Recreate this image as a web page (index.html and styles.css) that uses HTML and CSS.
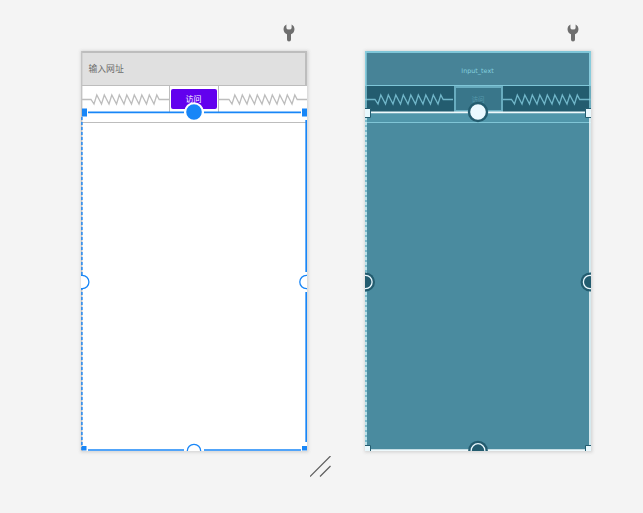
FILE: index.html
```html
<!DOCTYPE html>
<html lang="zh">
<head>
<meta charset="utf-8">
<title>Layout Editor</title>
<link rel="stylesheet" href="styles.css">
</head>
<body>
<svg class="defs" width="0" height="0">
  <defs>
    <path id="wrench" d="M3.400 .4A5.400 5.400 0 0 0 4 10.200V15.500Q4 17.500 6 17.500T8 15.500V10.200A5.400 5.400 0 0 0 8.600 .4V4Q8.600 5.500 6 5.500T3.400 4Z"/>
    <path id="spring" d="M0 13.500H10l3 4.500 2.800-9 4.700 9 2.800-9 4.700 9 2.800-9 4.700 9 2.800-9 4.700 9 2.800-9 4.700 9 2.800-9 4.700 9 2.800-9 4.700 9 2.800-9 4.700 9 2.800-9 2.400 4.500H89"/>
  </defs>
</svg>
<main class="surface">
  <section class="preview design">
    <svg class="wrench" viewBox="0 0 12 18"><use href="#wrench"/></svg>
    <div class="screen">
      <div class="field"><span>输入网址</span></div>
      <div class="row">
        <svg class="spring" viewBox="0 0 88 27"><use href="#spring"/></svg>
        <div class="cell"><div class="button">访问</div></div>
        <svg class="spring" viewBox="0 0 88 27"><use href="#spring"/></svg>
      </div>
      <div class="gap"></div>
      <div class="web"></div>
      <svg class="selection" viewBox="0 0 226 400">
        <path class="edge" d="M7 61.300H103M123 61.300H220M7 399H103M123 399H220M225.200 69V221M225.200 241V391"/>
        <path class="side" d="M.7 0V400"/>
        <path class="dash" d="M.9 66V399"/>
        <path class="outline" d="M1 57.500H6V65.500H1ZM221 57.500H226V65.500H221ZM1 395H5.500V399.500H1ZM221 395H226V399.500H221Z"/>
        <circle class="anchor" cx="113" cy="61" r="8.800"/>
        <circle class="ring" cx="1.200" cy="231" r="6.700"/>
        <circle class="ring" cx="225.500" cy="231" r="6.700"/>
        <circle class="ring" cx="113" cy="400" r="6.700"/>
      </svg>
    </div>
  </section>
  <section class="preview blueprint">
    <svg class="wrench" viewBox="0 0 12 18"><use href="#wrench"/></svg>
    <div class="screen">
      <div class="field"><span>Input_text</span></div>
      <div class="row">
        <svg class="spring" viewBox="0 0 88 27"><use href="#spring"/></svg>
        <div class="cell"><div class="button">访问</div></div>
        <svg class="spring" viewBox="1.500 0 88 27"><use href="#spring"/></svg>
      </div>
      <div class="gap"></div>
      <div class="web"></div>
      <svg class="selection" viewBox="0 0 226 400">
        <path class="side" d="M1 0V400M225 0V66"/>
        <path class="edge" d="M4 61.300H222M2 399.200H226M225 66V399"/>
        <path class="dash" d="M1 66V399"/>
        <path class="outline" d="M-1 57.500H5.500V66.500H-1ZM220.500 57.500H227V66.500H220.500ZM-1 394.500H5.500V401H-1ZM220.500 394.500H227V401H220.500Z"/>
        <circle class="anchor" cx="113" cy="61" r="9"/>
        <circle class="halo" cx=".5" cy="231" r="9.500"/><circle class="ring" cx=".5" cy="231" r="6.600"/>
        <circle class="halo" cx="225" cy="231" r="9.500"/><circle class="ring" cx="225" cy="231" r="6.600"/>
        <circle class="halo" cx="113" cy="399.500" r="9.800"/><circle class="ring" cx="113" cy="399.500" r="6.800"/>
      </svg>
    </div>
  </section>
  <svg class="resize" viewBox="0 0 22 22"><path d="M0 20.500L20.500 0M10 20.500L20.500 10"/></svg>
</main>
</body>
</html>
```
FILE: styles.css
```css
body {
  margin: 0;
  background: #f4f4f4;
  font-family: "Noto Sans", "Noto Sans CJK SC", sans-serif;
}
.defs { position: absolute; }
.surface {
  position: relative;
  box-sizing: border-box;
  width: 643px;
  height: 513px;
  padding: 24px 0 0 81px;
  display: flex;
  gap: 58px;
}
.preview {
  width: 226px;
  display: flex;
  flex-direction: column;
  align-items: flex-end;
  gap: 9px;
}
.wrench {
  width: 12px;
  height: 18px;
  margin-right: 12px;
  fill: #6e6e6e;
}
.screen {
  position: relative;
  box-sizing: border-box;
  width: 226px;
  height: 400px;
  display: flex;
  flex-direction: column;
  background: #fff;
  box-shadow: 0 0 3px 1.5px #d4d4d4;
}
.field {
  box-sizing: border-box;
  height: 35px;
  padding: 0 0 2px 6.5px;
  display: flex;
  align-items: center;
  background: #e0e0e0;
  border: 2px solid #bdbdbd;
  border-width: 2px 2px 1px 1px;
  color: #6c6c6c;
  font-size: 8.8px;
}
.row {
  height: 26px;
  display: flex;
}
.spring {
  width: 88px;
  height: 27px;
  fill: none;
  stroke: #bdbdbd;
  stroke-width: 1.300;
}
.cell {
  box-sizing: border-box;
  width: 50px;
  height: 26px;
  padding: 3px 1px 2px;
  border: 1px solid #bdbdbd;
  border-width: 0 1px;
}
.button {
  height: 20px;
  border-radius: 2px;
  background: #6200ee;
  color: #fff;
  font-size: 8px;
  line-height: 19px;
  text-align: center;
  text-indent: -1px;
}
.gap {
  box-sizing: border-box;
  height: 11px;
  border-bottom: 1px solid #bdbdbd;
}
.web { flex: 1; }
.selection {
  position: absolute;
  inset: 0;
  width: 226px;
  height: 400px;
  overflow: hidden;
}
.side { fill: none; stroke: #c3c3c3; stroke-width: 1.400; }
.edge { fill: none; stroke: #1886f7; stroke-width: 1.700; }
.dash { fill: none; stroke: #1886f7; stroke-width: 1.400; stroke-dasharray: 3 2; }
.outline { fill: #1886f7; }
.anchor { fill: #1886f7; stroke: #fff; stroke-width: 2; }
.ring { fill: #fff; stroke: #1886f7; stroke-width: 1.300; }

.blueprint .screen { background: #4a8b9f; }
.blueprint .field {
  justify-content: center;
  padding: 3px 0 0;
  background: #478397;
  border: 2px solid #7fc6d8;
  border-width: 2px 2px 1px 1px;
  color: #83cfdf;
  font-family: "DejaVu Sans", sans-serif;
  font-size: 6.400px;
}
.blueprint .row { background: #235c6f; }
.blueprint .spring { stroke: #71b6c9; }
.blueprint .cell {
  margin-left: 1px;
  width: 49px;
  padding: 0;
  border: 2px solid #68acbf;
  background: #39768a;
}
.blueprint .button {
  height: 22px;
  background: none;
  color: #589bad;
  font-size: 6.500px;
  line-height: 24px;
}
.blueprint .gap {
  background: #5096aa;
  border-color: #80c5d6;
}
.blueprint .side { stroke: #8bcfdf; }
.blueprint .edge { stroke: #eef9fc; }
.blueprint .dash { stroke: #d5f0f6; }
.blueprint .outline { fill: #e8f8fd; stroke: #235c6f; stroke-width: 1; }
.blueprint .anchor { fill: #ebf9ff; stroke: #235c6f; stroke-width: 2.400; }
.blueprint .halo { fill: #235c6f; }
.blueprint .ring { fill: #235c6f; stroke: #ebf9ff; stroke-width: 1.300; }
.resize {
  position: absolute;
  left: 310px;
  top: 456px;
  width: 22px;
  height: 22px;
  fill: none;
  stroke: #5e5e5e;
  stroke-width: 1.200;
}
```
